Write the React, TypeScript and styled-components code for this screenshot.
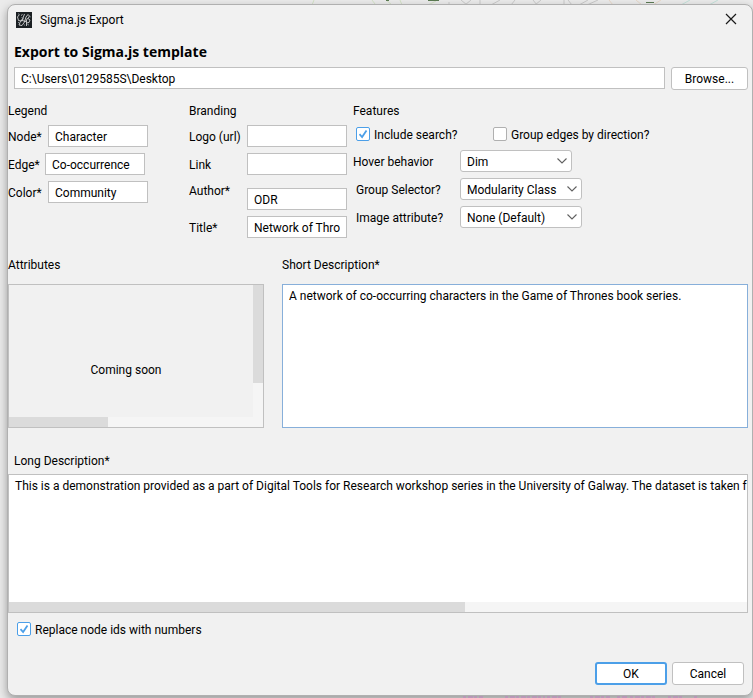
import React from "react";
import styled, { createGlobalStyle, css } from "styled-components";

const GlobalStyle = createGlobalStyle`
  *, *::before, *::after { box-sizing: border-box; }
  body {
    margin: 0;
    background: #ebebeb;
    color: #000;
    font: 12px/16px Roboto, "Open Sans", sans-serif;
  }
  input, textarea, select, button { font: inherit; color: inherit; margin: 0; }
`;

const Desktop = styled.div`
  position: relative;
  display: flex;
  overflow: hidden;
  min-height: 100vh;
  padding: 4px 0 2px 7px;
`;

const GraphBackdrop = styled.svg`
  position: absolute;
  left: 0;
  width: 100%;
  height: 6px;
`;
const TopBackdrop = styled(GraphBackdrop)`top: 0;`;
const BottomBackdrop = styled(GraphBackdrop)`bottom: 0;`;

const Dialog = styled.form`
  position: relative;
  flex: 1;
  min-width: 0;
  display: flex;
  flex-direction: column;
  background: #f1f1f1;
  border: 1px solid #b0b0b0;
  border-radius: 8px;
  box-shadow: 0 4px 10px rgba(0, 0, 0, 0.35);
`;

const TitleBar = styled.header`
  display: flex;
  align-items: center;
  gap: 8px;
  height: 30px;
  padding: 0 13px 0 8px;
`;
const TitleText = styled.span`flex: 1;`;
const CloseButton = styled.button`
  display: flex;
  padding: 0;
  border: 0;
  background: none;
`;

const Heading = styled.h1`
  margin: 7px 6px 5px;
  font-family: "Open Sans", "Noto Sans", sans-serif;
  font-size: 14px;
  line-height: 20px;
  font-weight: 700;
`;

const boxed = css`
  height: 22px;
  border: 1px solid #c0c0c0;
  background: #fff;
`;

const TextField = styled.input<{ $grow?: boolean }>`
  ${boxed}
  padding: 2px 6px 0;
  min-width: 0;
  ${(p) => (p.$grow ? "flex: 1;" : "width: 100px;")}
`;

const PathRow = styled.div`
  display: flex;
  gap: 6px;
  padding: 0 4px 0 6px;
`;

const Button = styled.button<{ $primary?: boolean; $wide?: boolean }>`
  height: 23px;
  width: ${(p) => (p.$wide ? 77 : 72)}px;
  padding: 0;
  border: ${(p) => (p.$primary ? "2px solid #4c9fe8" : "1px solid #c0c0c0")};
  border-radius: 3px;
  background: #fff;
`;

const Options = styled.div`
  display: flex;
  align-items: flex-start;
  margin-top: 13px;
`;
const Group = styled.section<{ $width?: number }>`
  ${(p) => (p.$width ? `width: ${p.$width}px; flex: none;` : "flex: 1;")}
`;
const GroupTitle = styled.h2`
  margin: 0;
  font-size: 12px;
  line-height: 16px;
  font-weight: 400;
`;

const Rows = styled.div`
  display: flex;
  flex-direction: column;
  gap: 6px;
  margin-top: 6px;
`;
const Caption = styled.span`
  padding-top: 2px;
  white-space: nowrap;
`;
const LegendRow = styled.label`
  display: flex;
  align-items: center;
  gap: 4px;
`;
const LegendName = styled(Caption)<{ $width: number }>`
  width: ${(p) => p.$width}px;
`;

const BrandRow = styled.label<{ $top?: boolean }>`
  display: grid;
  grid-template-columns: 58px 100px;
  align-items: ${(p) => (p.$top ? "start" : "center")};
  ${(p) => p.$top && "input { margin-top: 7px; }"}
`;

const CheckRow = styled.div`
  display: grid;
  grid-template-columns: 137px 1fr;
  margin-top: 6px;
  padding-left: 3px;
`;
const CheckLabel = styled.label`
  display: flex;
  align-items: center;
  gap: 4px;
`;
const CheckBox = styled.input`
  appearance: none;
  flex: none;
  width: 14px;
  height: 14px;
  border: 1px solid #b0b0b0;
  border-radius: 2px;
  background: #fff;
  &:checked {
    border-color: #4c9fe8;
    background: #fff
      url("data:image/svg+xml,%3Csvg xmlns='http://www.w3.org/2000/svg' viewBox='0 0 12 12'%3E%3Cpath d='M2.5 6.2l2.6 2.8 4.4-6.4' fill='none' stroke='%234c9fe8' stroke-width='1.8'/%3E%3C/svg%3E")
      center / 12px 12px no-repeat;
  }
`;

const SelectRows = styled(Rows)`margin-top: 7px;`;
const SelectRow = styled.label<{ $inset?: boolean }>`
  display: grid;
  grid-template-columns: ${(p) => (p.$inset ? "104px auto" : "107px auto")};
  justify-content: start;
  align-items: center;
  padding-left: ${(p) => (p.$inset ? 3 : 0)}px;
`;
const SelectShell = styled.span<{ $width: number }>`
  display: grid;
  align-items: center;
  width: ${(p) => p.$width}px;
  > * { grid-area: 1 / 1; }
  > svg { justify-self: end; margin-right: 4px; pointer-events: none; }
`;
const Select = styled.select`
  ${boxed}
  appearance: none;
  width: 100%;
  padding: 2px 18px 0 6px;
  border-radius: 3px;
`;

const Panels = styled.div`
  display: grid;
  grid-template-columns: 256px 1fr;
  gap: 18px;
  margin-top: 19px;
  padding-right: 4px;
`;
const Panel = styled.section`
  display: flex;
  flex-direction: column;
  gap: 11px;
  min-width: 0;
`;
const Frame = styled.div<{ $focus?: boolean; $height: number }>`
  display: grid;
  grid-template-columns: minmax(0, 1fr) auto;
  grid-template-rows: minmax(0, 1fr) auto;
  height: ${(p) => p.$height}px;
  border: 1px solid ${(p) => (p.$focus ? "#87afda" : "#c0c0c0")};
`;
const Placeholder = styled.div`
  display: flex;
  align-items: center;
  justify-content: center;
  padding: 38px 10px 0 0;
`;
const VerticalTrack = styled.div`
  grid-row: 1 / 3;
  grid-column: 2;
  width: 10px;
  background: #f5f5f5;
`;
const HorizontalTrack = styled.div`
  grid-row: 2;
  grid-column: 1;
  height: 10px;
  background: #f5f5f5;
`;
const VerticalThumb = styled.div`
  height: 69%;
  background: #dbdbdb;
`;
const HorizontalThumb = styled.div<{ $share: number }>`
  width: ${(p) => p.$share}%;
  height: 100%;
  background: #dbdbdb;
`;
const TextArea = styled.textarea`
  display: block;
  width: 100%;
  height: 100%;
  padding: 3px 0 0 6px;
  border: 0;
  resize: none;
  overflow: hidden;
  background: #fff;
`;

const LongSection = styled(Panel)`
  gap: 5px;
  margin-top: 25px;
  padding-right: 4px;
`;
const LongLabel = styled.label`padding-left: 6px;`;

const ReplaceRow = styled.div`
  display: flex;
  margin: 7px 0 0 9px;
`;
const Actions = styled.footer`
  display: flex;
  justify-content: flex-end;
  gap: 5px;
  margin-top: auto;
  padding: 0 8px 10px;
`;

const Chevron = () => (
  <svg width="12" height="8" viewBox="0 0 12 8" fill="none" stroke="#606060" strokeWidth="1.1" aria-hidden>
    <path d="M1.5 1.5 6 6l4.5-4.5" />
  </svg>
);

const AppIcon = () => (
  <svg width="16" height="16" viewBox="0 0 16 16" fill="none" stroke="#e8e8e8" strokeWidth="0.8" aria-hidden>
    <rect width="16" height="16" fill="#1b2023" stroke="none" />
    <path d="M3.500 2.500 1.500 5l1 3.500 3 .5 2-2.500M5 3.500l1.500-1M8.500 2 7 6l-3 4.500-1 2.500 3 .5L8.500 10l1.500-5 2-2.500 1.500 1.500-1.500 2.500-2 1M12 6.500l2 1.500-1 2.500-2.500.5M10.500 8v6M6 8.500l4 1" />
    <path d="M2 2h1M5.500 5l1 1M11.500 12.500l1.500.5M14 4v1.500M2 10.500h1M8 13h1" stroke="#9daab0" />
  </svg>
);

const App = () => (
  <>
    <GlobalStyle />
    <Desktop>
      <TopBackdrop viewBox="0 0 753 6" preserveAspectRatio="none" fill="none" strokeWidth="1" aria-hidden>
        <path d="M314 0l-2 5M372 0l3 4M386 0l6 5M400 0l2 5M436 1l-8 4" stroke="#d3e2c6" />
        <path d="M449 2v3M461 0l6 5M471 0l-6 5M480 0v5M500 0l-9 5M515 0l-4 5M533 0l4 5M541 0l-6 5M564 0v5M568 0l4 5M588 0l-9 5M598 0l-11 5" stroke="#c9c9c9" />
        <path d="M609 0l4 5M636 0l6 5M661 0l-8 5" stroke="#e8d8c8" />
        <path d="M690 0l-9 5M718 0l-9 5" stroke="#c4e2da" />
        <path d="M386 .5h3M428 .5h11M646 2.500h8" stroke="#5c7a54" />
      </TopBackdrop>
      <Dialog onSubmit={(e) => e.preventDefault()}>
        <TitleBar>
          <AppIcon />
          <TitleText>Sigma.js Export</TitleText>
          <CloseButton type="button" aria-label="Close">
            <svg width="16" height="16" viewBox="0 0 16 16" stroke="#1a1a1a" strokeWidth="1.2" aria-hidden>
              <path d="M3 2l10 10M13 2 3 12" />
            </svg>
          </CloseButton>
        </TitleBar>

        <Heading>Export to Sigma.js template</Heading>
        <PathRow>
          <TextField $grow aria-label="Export folder" defaultValue="C:\Users\0129585S\Desktop" />
          <Button type="button" $wide>Browse...</Button>
        </PathRow>

        <Options>
          <Group $width={181}>
            <GroupTitle>Legend</GroupTitle>
            <Rows>
              <LegendRow>
                <LegendName $width={36}>Node*</LegendName>
                <TextField defaultValue="Character" />
              </LegendRow>
              <LegendRow>
                <LegendName $width={33}>Edge*</LegendName>
                <TextField defaultValue="Co-occurrence" />
              </LegendRow>
              <LegendRow>
                <LegendName $width={36}>Color*</LegendName>
                <TextField defaultValue="Community" />
              </LegendRow>
            </Rows>
          </Group>

          <Group $width={164}>
            <GroupTitle>Branding</GroupTitle>
            <Rows>
              <BrandRow><Caption>Logo (url)</Caption><TextField /></BrandRow>
              <BrandRow><Caption>Link</Caption><TextField /></BrandRow>
              <BrandRow $top><Caption>Author*</Caption><TextField defaultValue="ODR" /></BrandRow>
              <BrandRow><Caption>Title*</Caption><TextField defaultValue="Network of Thro" /></BrandRow>
            </Rows>
          </Group>

          <Group>
            <GroupTitle>Features</GroupTitle>
            <CheckRow>
              <CheckLabel><CheckBox type="checkbox" defaultChecked /><Caption>Include search?</Caption></CheckLabel>
              <CheckLabel><CheckBox type="checkbox" /><Caption>Group edges by direction?</Caption></CheckLabel>
            </CheckRow>
            <SelectRows>
              <SelectRow>
                <Caption>Hover behavior</Caption>
                <SelectShell $width={112}><Select><option>Dim</option></Select><Chevron /></SelectShell>
              </SelectRow>
              <SelectRow $inset>
                <Caption>Group Selector?</Caption>
                <SelectShell $width={122}><Select><option>Modularity Class</option></Select><Chevron /></SelectShell>
              </SelectRow>
              <SelectRow $inset>
                <Caption>Image attribute?</Caption>
                <SelectShell $width={122}><Select><option>None (Default)</option></Select><Chevron /></SelectShell>
              </SelectRow>
            </SelectRows>
          </Group>
        </Options>

        <Panels>
          <Panel>
            <GroupTitle>Attributes</GroupTitle>
            <Frame $height={144}>
              <Placeholder>Coming soon</Placeholder>
              <VerticalTrack><VerticalThumb /></VerticalTrack>
              <HorizontalTrack><HorizontalThumb $share={40.6} /></HorizontalTrack>
            </Frame>
          </Panel>
          <Panel>
            <label htmlFor="short">Short Description*</label>
            <Frame $height={144} $focus>
              <TextArea id="short" defaultValue="A network of co-occurring characters in the Game of Thrones book series." />
            </Frame>
          </Panel>
        </Panels>

        <LongSection>
          <LongLabel htmlFor="long">Long Description*</LongLabel>
          <Frame $height={139}>
            <TextArea
              id="long"
              wrap="off"
              defaultValue="This is a demonstration provided as a part of Digital Tools for Research workshop series in the University of Galway. The dataset is taken from"
            />
            <HorizontalTrack><HorizontalThumb $share={61.8} /></HorizontalTrack>
          </Frame>
        </LongSection>

        <ReplaceRow>
          <CheckLabel><CheckBox type="checkbox" defaultChecked /><Caption>Replace node ids with numbers</Caption></CheckLabel>
        </ReplaceRow>
        <Actions>
          <Button type="submit" $primary>OK</Button>
          <Button type="button">Cancel</Button>
        </Actions>
      </Dialog>
      <BottomBackdrop viewBox="0 0 753 6" preserveAspectRatio="none" aria-hidden>
        <path d="M463 5h20M505 5h40M547 5h14M590 5h20M617 5h10M630 5h25M668 5h14M694 5h4" stroke="#c080c0" strokeDasharray="3 2 5 1" fill="none" />
      </BottomBackdrop>
    </Desktop>
  </>
);

export default App;
